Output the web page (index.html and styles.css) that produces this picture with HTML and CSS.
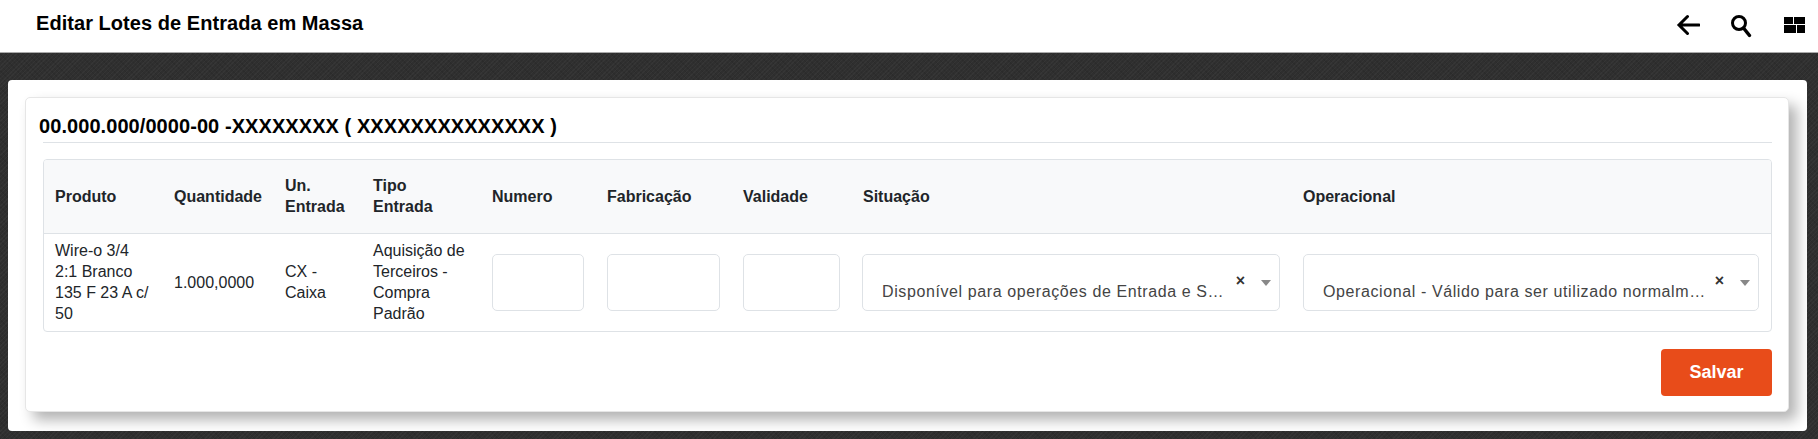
FILE: index.html
```html
<!DOCTYPE html>
<html lang="pt-br">

<head>
    <meta charset="UTF-8">
    <meta name="viewport" content="width=device-width, initial-scale=1.0">
    <link rel="stylesheet" href="styles.css">
    <title>Editar Lotes de Entrada em Massa</title>
</head>

<body>
    <header class="topbar">
        <h1 class="pageTitle">Editar Lotes de Entrada em Massa</h1>
        <div class="topIcons">
            <svg class="icon" width="24" height="22" viewBox="0 0 24 22"><path d="M23 11H4M11.500 2.500L3 11l8.500 8.500" fill="none" stroke="#000" stroke-width="3" stroke-linecap="round"/></svg>
            <svg class="icon iconSearch" width="22" height="24" viewBox="0 0 22 24"><circle cx="9" cy="9" r="6.500" fill="none" stroke="#000" stroke-width="3"/><path d="M13.500 14l6 7.500" fill="none" stroke="#000" stroke-width="3.500" stroke-linecap="round"/></svg>
            <svg class="icon iconGrid" width="21" height="16" viewBox="0 0 21 16"><path d="M0 0h9v7H0zM10 0h11v7H10zM0 8h12v8H0zM13 8h8v8h-8z" fill="#000"/></svg>
        </div>
    </header>

    <main class="backdrop">
        <div class="panel">
            <div class="card">
                <h2 class="cardTitle"><span class="cardTitleText">00.000.000/0000-00 -XXXXXXXX ( XXXXXXXXXXXXXX )</span></h2>

                <div class="tableWrap">
                    <table class="lotes">
                        <colgroup>
                            <col class="colProduto">
                            <col class="colQtd">
                            <col class="colUn">
                            <col class="colTipo">
                            <col class="colNumero">
                            <col class="colFab">
                            <col class="colVal">
                            <col class="colSit">
                            <col>
                        </colgroup>
                        <thead>
                            <tr>
                                <th>Produto</th>
                                <th>Quantidade</th>
                                <th>Un.<br>Entrada</th>
                                <th>Tipo<br>Entrada</th>
                                <th>Numero</th>
                                <th>Fabricação</th>
                                <th>Validade</th>
                                <th>Situação</th>
                                <th>Operacional</th>
                            </tr>
                        </thead>
                        <tbody>
                            <tr>
                                <td>Wire-o 3/4<br>2:1 Branco<br>135 F 23 A c/<br>50</td>
                                <td>1.000,0000</td>
                                <td>CX -<br>Caixa</td>
                                <td>Aquisição de<br>Terceiros -<br>Compra<br>Padrão</td>
                                <td><input class="field" type="text"></td>
                                <td><input class="field" type="text"></td>
                                <td><input class="field" type="text"></td>
                                <td>
                                    <div class="combo comboSit">
                                        <span class="comboText">Disponível para operações de Entrada e S…</span>
                                        <span class="comboClear">×</span>
                                        <span class="comboArrow"></span>
                                    </div>
                                </td>
                                <td>
                                    <div class="combo">
                                        <span class="comboText">Operacional - Válido para ser utilizado normalm…</span>
                                        <span class="comboClear">×</span>
                                        <span class="comboArrow"></span>
                                    </div>
                                </td>
                            </tr>
                        </tbody>
                    </table>
                </div>

                <div class="actions">
                    <button class="btnSalvar">Salvar</button>
                </div>
            </div>
        </div>
    </main>
</body>

</html>
```

FILE: styles.css
```css
* {
    box-sizing: border-box;
}

html, body {
    height: 100%;
}

body {
    margin: 0;
    display: flex;
    flex-direction: column;
    font-family: "Liberation Sans", Arial, sans-serif;
    font-size: 16px;
    line-height: 21px;
    color: #212529;
    overflow: hidden;
}

.topbar {
    height: 53px;
    flex: none;
    display: flex;
    justify-content: space-between;
    padding: 0 13px 0 36px;
    background-color: #fff;
    border-bottom: 1px solid #aaa;
}

.pageTitle {
    margin: 11px 0 0;
    font-size: 20px;
    line-height: 24px;
    letter-spacing: .05px;
    color: #000;
}

.topIcons {
    display: flex;
    gap: 30px;
    padding-top: 14px;
    align-items: flex-start;
}

.iconSearch {
    margin-right: 2px;
}

.iconGrid {
    margin-top: 3px;
}

.backdrop {
    flex: 1;
    padding: 27px 11px 8px 8px;
    background-color: #2f2f2f;
    background-image:
        repeating-linear-gradient(135deg, rgba(255, 255, 255, .03) 0, rgba(255, 255, 255, .03) 1px, transparent 1px, transparent 3px),
        repeating-linear-gradient(45deg, rgba(0, 0, 0, .08) 0, rgba(0, 0, 0, .08) 1px, transparent 1px, transparent 4px);
}

.panel {
    height: 351px;
    padding: 17px 18px 0 17px;
    background-color: #fff;
    border-radius: 4px;
}

.card {
    height: 315px;
    padding: 17px 16px 0 17px;
    background-color: #fff;
    border: 1px solid #e6e6e6;
    border-radius: 5px;
    box-shadow: 8px 8px 14px rgba(0, 0, 0, .3);
}

.cardTitle {
    margin: 0 0 16px;
    padding-bottom: 5px;
    font-size: 20px;
    line-height: 22px;
    letter-spacing: .07px;
    color: #000;
    border-bottom: 1px solid #dee2e6;
}

.cardTitleText {
    display: block;
    margin-left: -4px;
}

.tableWrap {
    border: 1px solid #dee2e6;
    border-radius: 4px;
    overflow: hidden;
}

.lotes {
    width: 100%;
    table-layout: fixed;
    border-collapse: collapse;
}

.colProduto { width: 118px; }
.colQtd { width: 111px; }
.colUn { width: 88px; }
.colTipo { width: 119px; }
.colNumero { width: 115px; }
.colFab { width: 136px; }
.colVal { width: 120px; }
.colSit { width: 440px; }

.lotes th {
    height: 73px;
    padding: 0 12px;
    text-align: left;
    vertical-align: middle;
    background-color: #f8f9fa;
    border-bottom: 1px solid #dee2e6;
}

.lotes th:first-child,
.lotes td:first-child {
    padding-left: 11px;
}

.lotes td {
    height: 98px;
    padding: 0 12px;
    vertical-align: middle;
}

.field {
    display: block;
    width: calc(100% + 1px);
    height: 57px;
    padding: 6px 12px;
    background-color: #fff;
    border: 1px solid #dee2e6;
    border-radius: 5px;
}

.combo {
    position: relative;
    display: flex;
    align-items: flex-end;
    height: 57px;
    padding: 0 36px 8px 19px;
    border: 1px solid #dee2e6;
    border-radius: 5px;
    color: #444;
}

.comboSit {
    margin: 0 -1px;
}

.comboText {
    white-space: nowrap;
    letter-spacing: .6px;
}

.comboClear {
    position: absolute;
    right: 34px;
    top: 18px;
    font-size: 16px;
    font-weight: bold;
    line-height: 16px;
    color: #333;
}

.comboArrow {
    position: absolute;
    right: 8px;
    top: 25px;
    border-top: 6px solid #888;
    border-left: 5px solid transparent;
    border-right: 5px solid transparent;
}

.actions {
    display: flex;
    justify-content: flex-end;
    margin-top: 17px;
}

.btnSalvar {
    width: 111px;
    height: 47px;
    font-family: inherit;
    font-size: 18px;
    font-weight: bold;
    color: #fff;
    background-color: #e84c1a;
    border: 0;
    border-radius: 4px;
}
```
